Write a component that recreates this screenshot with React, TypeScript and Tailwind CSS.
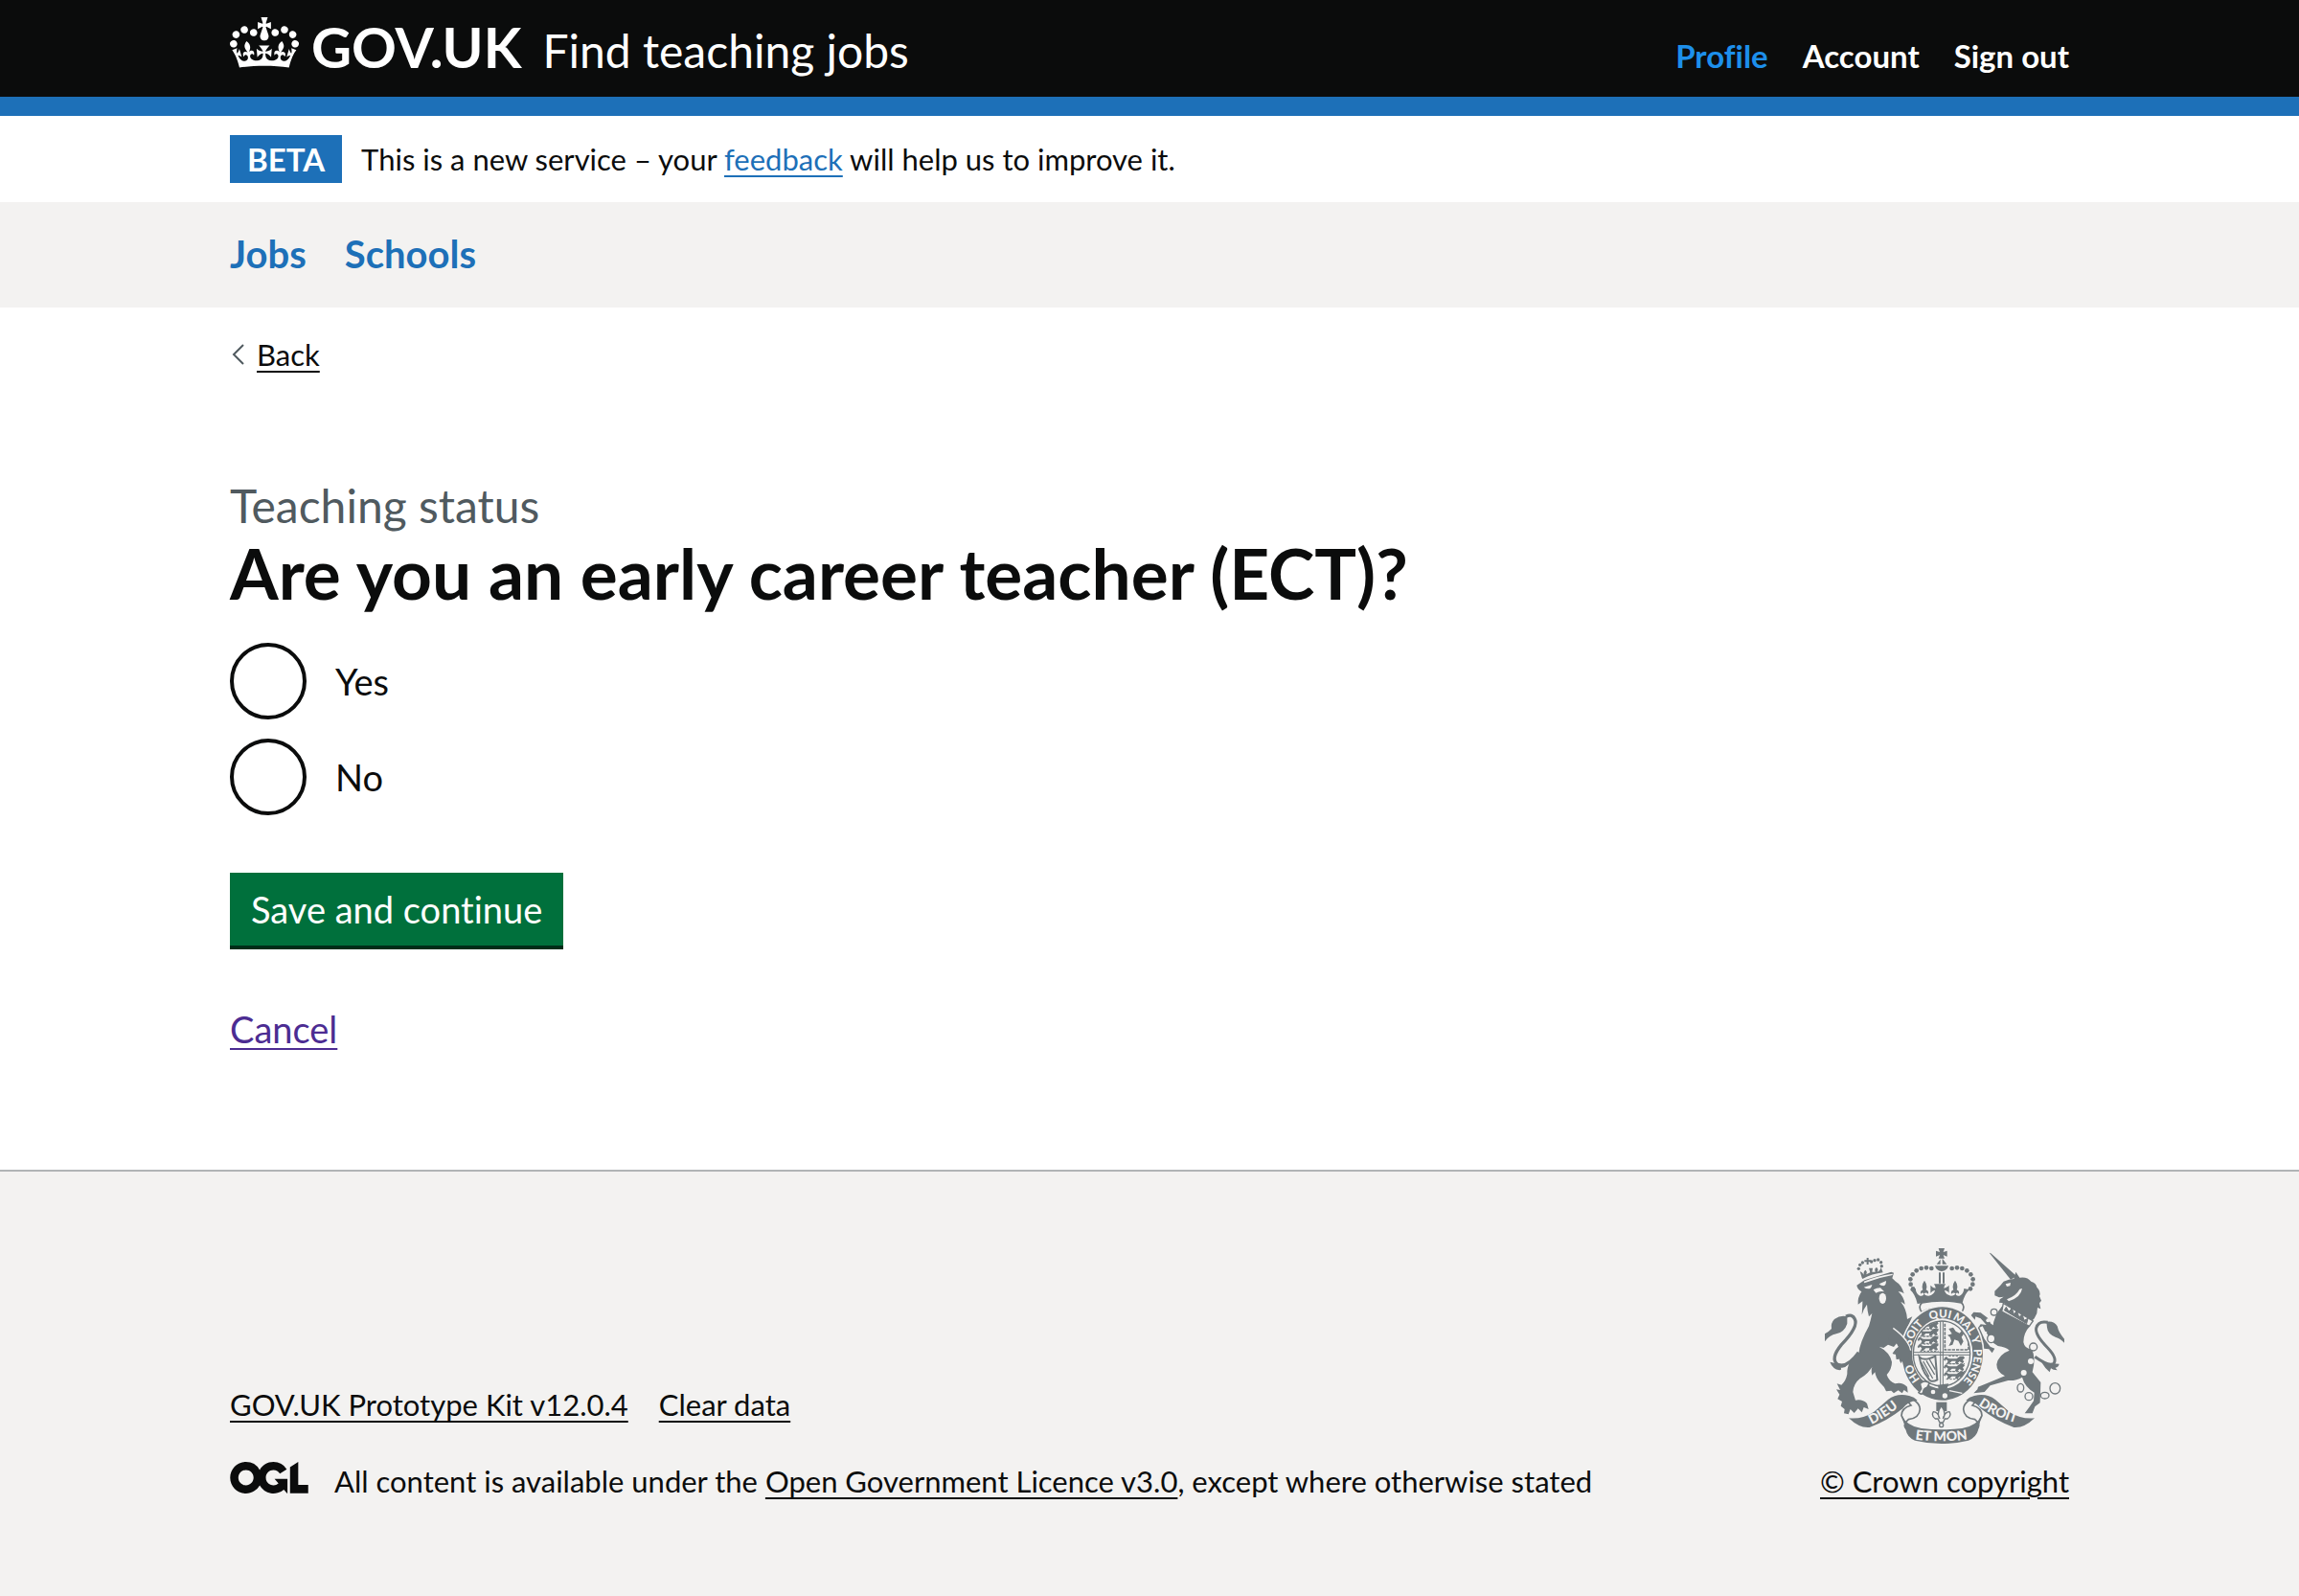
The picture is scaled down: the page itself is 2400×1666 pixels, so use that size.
import type { ReactNode } from "react";

const GREY = "#6f777b";
const PAPER = "#f3f2f1";

function Crown() {
  return (
    <svg viewBox="0 0 132 97" className="-mb-[3px] h-[53px] w-[72px] shrink-0 fill-current" aria-hidden="true">
      <path
        fillRule="evenodd"
        d="M25 30.2c3.5 1.5 7.7-.2 9.1-3.7 1.5-3.6-.2-7.8-3.9-9.2-3.6-1.4-7.6.3-9.1 3.9-1.4 3.5.3 7.5 3.9 9zM9 39.5c3.6 1.5 7.8-.2 9.2-3.7 1.5-3.6-.2-7.8-3.9-9.1-3.6-1.5-7.6.2-9.1 3.8-1.4 3.5.3 7.5 3.8 9zM4.4 57.2c3.5 1.5 7.7-.2 9.1-3.8 1.5-3.6-.2-7.7-3.9-9.1-3.5-1.5-7.6.3-9.1 3.8-1.4 3.5.3 7.6 3.9 9.1zm38.3-21.4c3.5 1.5 7.7-.2 9.1-3.8 1.5-3.6-.2-7.7-3.9-9.1-3.6-1.5-7.6.3-9.1 3.8-1.3 3.6.4 7.7 3.9 9.1zm64.4-5.6c-3.6 1.5-7.8-.2-9.1-3.7-1.5-3.6.2-7.8 3.8-9.2 3.6-1.4 7.7.3 9.2 3.9 1.3 3.5-.4 7.5-3.9 9zm15.9 9.3c-3.6 1.5-7.7-.2-9.1-3.7-1.5-3.6.2-7.8 3.7-9.1 3.6-1.5 7.7.2 9.2 3.8 1.5 3.5-.3 7.5-3.8 9zm4.7 17.7c-3.6 1.5-7.8-.2-9.2-3.8-1.5-3.6.2-7.7 3.9-9.1 3.6-1.5 7.7.3 9.2 3.8 1.3 3.5-.4 7.6-3.9 9.1zM89.3 35.8c-3.6 1.5-7.8-.2-9.2-3.8-1.4-3.6.2-7.7 3.9-9.1 3.6-1.5 7.7.3 9.2 3.8 1.4 3.6-.3 7.7-3.9 9.1zM69.7 17.7l8.9 4.7V9.3l-8.9 2.8c-.2-.3-.5-.6-.9-.9L72.4 0H59.6l3.5 11.2c-.3.3-.6.5-.9.9l-8.8-2.8v13.1l8.8-4.7c.3.3.6.7.9.9l-5 15.4v.1c-.2.8-.4 1.6-.4 2.4 0 4.1 3.1 7.5 7 8.1h.2c.3 0 .7.1 1 .1.4 0 .7 0 1-.1h.2c4-.6 7.1-4.1 7.1-8.1 0-.8-.1-1.7-.4-2.4V34l-5.1-15.4c.4-.2.7-.6 1-.9zM66 92.8c16.9 0 32.8 1.1 47.1 3.2 4-16.9 8.9-26.7 14-33.5l-9.6-3.4c1 4.9 1.1 7.2 0 10.2-1.5-1.4-3-4.3-4.2-8.7L108.6 76c2.8-2 5-3.2 7.5-3.3-4.4 9.4-10 11.9-13.6 11.2-4.3-.8-6.3-4.6-5.6-7.9 1-4.7 5.7-5.9 8-.5 4.3-8.7-3-11.4-7.6-8.8 7.1-7.2 7.9-13.5 2.1-21.1-8 6.1-8.1 12.3-4.5 20.8-4.7-5.4-12.1-2.5-9.5 6.2 3.4-5.2 7.9-2 7.2 3.1-.6 4.3-6.4 7.8-13.5 7.2-10.3-.9-10.9-8-11.2-13.8 2.5-.5 7.1 1.8 11 7.3L80.2 60c-4.1 4.4-8 5.3-12.3 5.4 1.4-4.4 8-11.6 8-11.6H55.5s6.4 7.2 7.9 11.6c-4.2-.1-8-1-12.3-5.4l1.4 16.4c3.9-5.5 8.5-7.7 10.9-7.3-.3 5.8-.9 12.8-11.1 13.8-7.2.6-12.9-2.9-13.5-7.2-.7-5 3.8-8.3 7.1-3.1 2.7-8.7-4.6-11.6-9.4-6.2 3.7-8.5 3.6-14.7-4.6-20.8-5.8 7.6-5 13.9 2.2 21.1-4.7-2.6-11.9.1-7.7 8.8 2.3-5.5 7.1-4.2 8.1.5.7 3.3-1.3 7.1-5.7 7.9-3.5.7-9-1.8-13.5-11.2 2.5.1 4.7 1.3 7.5 3.3l-4.7-15.4c-1.2 4.4-2.7 7.2-4.3 8.7-1.1-3-.9-5.3 0-10.2l-9.5 3.4c5 6.9 9.9 16.7 14 33.5 14.8-2.1 30.8-3.2 47.7-3.2z"
      />
    </svg>
  );
}

function OglLogo() {
  return (
    <svg viewBox="0 0 483.2 195.7" className="h-[33px] w-[82px] shrink-0 fill-current" role="img" aria-label="Open Government Licence">
      <path d="M421.5 142.8V.1l-50.7 32.3v161.1h112.4v-50.7zm-122.3-9.6A47.12 47.12 0 0 1 221 97.8c0-26 21.1-47.1 47.1-47.1 16.7 0 31.4 8.7 39.7 21.8l42.7-27.2A97.63 97.63 0 0 0 268.1 0c-36.5 0-68.3 20.1-85.1 49.7A98 98 0 0 0 97.8 0C43.9 0 0 43.9 0 97.8s43.9 97.8 97.8 97.8c36.5 0 68.3-20.1 85.1-49.7a97.76 97.76 0 0 0 149.6 25.4l19.4 22.2h3v-87.8h-80l24.3 27.5zM97.8 145c-26 0-47.1-21.1-47.1-47.1s21.1-47.1 47.1-47.1 47.1 21.1 47.1 47.1S123.8 145 97.8 145" />
    </svg>
  );
}

const crownPearls = [
  [376, 99], [360, 97], [344, 99], [329, 106], [317, 118], [310, 133], [311, 149], [318, 163],
];

const garterWords: [string, string][] = [
  ["HO", "16%"], ["SOIT", "34.5%"], ["QUI", "49%"], ["MAL", "60.5%"], ["Y", "69%"], ["PENSE", "81%"],
];

const chainRings = [
  [572, 236, 10, 10], [563, 319, 12, 13], [695, 345, 12, 12], [655, 473, 10, 13], [681, 500, 12, 12], [731, 497, 13, 10], [763, 475, 16, 17],
];

function Passant({ y, x = 334 }: { y: number; x?: number }) {
  return (
    <g transform={`translate(${x} ${y})`}>
      <path d="M2 -8q6 -5 9 2l6 2h22l10 -8h12l3 6l-6 5l4 8l-6 3l-8 -6l-6 6h-8l2 -7h-12l-8 8h-8l4 -8l-6 -5l-4 5l-4 -4z" fill={GREY} />
      <path d="M6 12h58M14 -12h30" stroke={GREY} strokeWidth="3" strokeDasharray="7 4" />
    </g>
  );
}

function RoyalArms() {
  return (
    <svg viewBox="42 36 750 612" className="h-[204px] w-[250px]" aria-hidden="true">
      <defs>
        <path id="garter" d="M410 479A99 113 0 0 1 410 253A99 113 0 0 1 410 479" />
        <path id="dieu" d="M188 588Q238 564 286 522" />
        <path id="etmon" d="M312 632Q407 648 502 632" />
        <path id="droit" d="M522 528Q572 564 644 584" />
        <clipPath id="shield"><ellipse cx="408" cy="366" rx="88" ry="101" /></clipPath>
      </defs>

      {/* Imperial crown */}
      <g fill={GREY}>
        <path d="M398 36h19l-4 12 12 -4v18l-12 -5 4 11h-19l4 -11-12 5v-18l12 4z" />
        <path d="M406 68l-14 18h12V70zM410 68v18h14zM387 91h42q-4 16 -21 17q-17 -1 -21 -17z" />
        <path d="M399 112h6v34h-6zM411 112h6v34h-6z" />
        {crownPearls.map(([x, y]) => (
          <g key={x}>
            <circle cx={x} cy={y} r="7" />
            <circle cx={816 - x} cy={y} r="7" />
          </g>
        ))}
        <path d="M396 148h24q-5 9 -5 13q8 0 16 -9v24q-6 -8 -14 -9q2 14 20 18q12 0 14 -8q-8 -4 -12 2q-5 -8 6 -13q-6 -14 5 -29q11 15 5 29q11 5 6 13q-4 -6 -9 -1q0 9 12 7q12 -5 14 -23l17 4q-16 14 -23 44q-70 -15 -140 0q-7 -30 -23 -44l17 -4q2 18 14 23q12 2 12 -7q-5 -5 -9 1q-5 -8 6 -13q-6 -14 5 -29q11 15 5 29q11 5 6 13q-4 -6 -12 -2q2 8 14 8q18 -4 20 -18q-8 1 -14 9v-24q8 9 16 9q0 -4 -5 -13z" />
      </g>
      <path d="M346 207Q333 217 345 236Q408 206 471 236Q483 217 470 207Q408 194 346 207z" fill={PAPER} stroke={GREY} strokeWidth="5" />

      {/* Lion supporter */}
      <path d="M148 362Q112 412 82 400Q58 382 94 338Q148 282 136 258Q128 240 108 250" fill="none" stroke={GREY} strokeWidth="10" />
      <path d="M58 392Q74 396 92 398L112 402Q106 412 92 410Q96 416 88 418Q66 414 58 392zM112 250Q92 244 72 258Q60 270 63 288Q52 300 42 304V328Q56 308 78 304Q104 298 112 272z" fill={GREY} />
      <path
        d="M142 152L166 136L250 110L258 113L253 130L264 140Q282 150 290 178Q280 170 272 172Q290 188 293 212Q284 204 280 204Q298 226 300 258L316 250Q302 280 290 310Q304 330 308 356L316 374L313 390L304 380L299 396L289 384L280 396L276 382L267 384L266 368L254 366L264 352L273 345L268 332L258 345L240 338L226 348L212 344Q246 362 252 392Q252 414 236 432Q242 452 262 460Q284 454 300 470L302 488L290 480L284 490L272 481L258 490L250 482L234 484Q230 470 216 458Q202 444 199 424L190 434Q184 410 196 398Q180 428 152 444Q132 460 130 486L138 512Q160 508 174 522L179 540L164 534L158 550L146 538L134 552L122 540L116 556L102 553L104 540L92 530L96 516L82 508L88 494L78 478L90 480L80 460L94 464Q108 452 112 430Q110 390 148 366Q152 330 180 280L185 262L190 240L180 250L176 232L174 212L164 228Q160 240 158 244Q160 214 160 202L146 212Q144 190 157 172Q144 164 142 152z"
        fill={GREY}
      />
      <g fill={PAPER}>
        <path d="M164 158L190 150Q188 162 180 163Q170 163 164 158zM212 148L234 138Q234 152 226 154Q218 154 212 148zM194 166Q204 160 216 160L228 172Q214 168 202 176z" />
        <ellipse cx="223" cy="193" rx="11" ry="17" />
        <path d="M164 140Q206 122 254 116L254 120Q208 128 166 145z" />
      </g>
      <g fill={GREY}>
        <path d="M158 128L152 108Q160 112 164 119Q162 108 170 104Q176 110 172 118L184 112L180 98H192L190 110L200 110Q196 100 204 96Q212 102 206 110Q214 108 218 96L224 112Q190 116 160 132z" />
        <path d="M173 66h6v7h7v6h-7v8h-6v-8h-7v-6h7z" />
        {[[148, 100], [152, 88], [160, 81], [188, 78], [198, 74], [209, 72], [218, 80], [220, 92]].map(([x, y]) => (
          <circle key={x} cx={x} cy={y} r="5" />
        ))}
      </g>

      {/* Unicorn supporter */}
      <path d="M700 376Q742 406 758 398Q772 382 740 348Q700 308 704 286Q710 262 740 268" fill="none" stroke={GREY} strokeWidth="9" />
      <path d="M736 266Q760 262 770 280Q774 300 792 320V332Q780 318 764 314Q740 304 738 284zM740 396L776 398Q774 408 764 410L770 418Q756 418 750 412L746 424Q732 412 720 392z" fill={GREY} />
      <g fill={GREY}>
        <path d="M557 50L562 52L643 124L624 134z" />
        <path d="M640 110L652 128Q676 124 688 140Q704 144 706 158Q720 172 714 186L720 200L714 208L718 226L708 222L706 240L698 256L692 262Q640 236 604 208L588 206L590 196L602 188L588 190L574 184L574 170L592 152L602 140L618 134L634 132z" />
        <path d="M598 216L686 278Q664 300 664 330Q668 352 690 352Q704 380 692 424L718 456L716 520L700 532L692 553L668 553L682 534L696 514L698 488Q668 470 660 440Q640 452 616 450L560 466L542 486L508 490L520 478L522 470L548 460L606 436Q580 424 580 400Q586 368 620 356Q610 346 584 342L566 330L548 300L568 284Q570 250 598 216z" />
        <path d="M500 246L508 236L530 238L552 254L562 272L574 280L562 302L544 296L536 280L526 284L542 320L560 344L574 350L566 364L556 352L540 350L524 326L518 290L530 274L548 276L530 256L514 250L512 260z" />
      </g>
      <path d="M608 148L624 144L622 154L612 156zM660 162Q656 190 618 202L612 196Q642 184 652 164z" fill={PAPER} />
      <path d="M601 208L694 264L682 280L596 234z" fill={PAPER} stroke={GREY} strokeWidth="4" />
      <path d="M604 230L610 220L618 234L628 224L634 242L644 232L650 252L660 242L666 262L678 256L674 272z" fill={GREY} stroke={GREY} strokeWidth="3" />
      <g fill={PAPER} stroke={GREY} strokeWidth="4">
        {chainRings.map(([x, y, rx, ry]) => <ellipse key={x} cx={x} cy={y} rx={rx} ry={ry} />)}
      </g>
      <g fill={PAPER}>
        <circle cx="687" cy="390" r="9" />
        <circle cx="665" cy="426" r="9" />
        <circle cx="553" cy="262" r="6" />
      </g>

      {/* Garter and shield */}
      <ellipse cx="410" cy="366" rx="132" ry="151" fill={PAPER} />
      <ellipse cx="410" cy="366" rx="127" ry="146" fill={GREY} />
      <ellipse cx="410" cy="366" rx="95" ry="110" fill={PAPER} />
      <ellipse cx="408" cy="366" rx="89" ry="102" fill={PAPER} stroke={GREY} strokeWidth="4" />
      <g clipPath="url(#shield)">
        <Passant y={300} /><Passant y={324} /><Passant y={346} /><Passant y={278} />
        <Passant y={386} x={416} /><Passant y={410} x={416} /><Passant y={434} x={416} />
        <path d="M418 272V354H492V290" fill="none" stroke={GREY} strokeWidth="5" strokeDasharray="10 3" />
        <path d="M430 288L444 284L452 296L464 302L474 290L480 300L470 314L476 328L468 342L460 326L448 322L442 338L430 342L438 326L434 314L426 308L440 304z" fill={GREY} />
        <path d="M338 376Q352 392 388 374L394 448Q372 460 364 440Q346 420 338 376z" fill="none" stroke={GREY} strokeWidth="6" />
        <path d="M350 390L380 444M360 388L386 432M370 384L388 416M344 394L368 438" stroke={GREY} strokeWidth="4" />
      </g>
      <path d="M404 264V468M412 264V468M320 362H496M320 370H496" stroke={GREY} strokeWidth="3" />
      <path d="M396 464L430 460L424 478H398z" fill={GREY} />
      <g fontFamily="Lato" fontWeight="900" fill={PAPER}>
        {garterWords.map(([word, at]) => (
          <text key={word} fontSize="35" textAnchor="middle">
            <textPath href="#garter" startOffset={at}>{word}</textPath>
          </text>
        ))}
      </g>
      <path d="M340 460Q354 446 370 458L362 472Q352 474 350 486Q346 498 336 488L344 476z" fill={PAPER} stroke={GREY} strokeWidth="5" />
      <circle cx="381" cy="486" r="7" fill={PAPER} />
      <circle cx="418" cy="498" r="8" fill={PAPER} />
      <path d="M432 482L472 490" stroke={PAPER} strokeWidth="4" />
      <path d="M256 286Q284 306 298 330Q306 342 308 356L316 374L313 390L304 380L299 396L289 384L280 396L274 382L266 384L264 368L254 366L264 352L273 345L262 326L240 322z" fill={GREY} />
      <path d="M256 286Q284 306 300 330Q309 344 311 356" fill="none" stroke={PAPER} strokeWidth="4" />

      {/* Motto scroll */}
      <g fill={PAPER} stroke={GREY} strokeWidth="5">
        <path d="M288 500Q338 510 340 540Q338 568 304 572Q282 590 300 604Q292 580 282 560Q282 536 312 528z" />
        <path d="M528 500Q478 510 476 540Q478 568 512 572Q534 590 516 604Q524 580 534 560Q534 536 504 528z" />
      </g>
      <g fill={GREY}>
        <path d="M117 568Q160 572 196 548L240 510Q268 488 306 498Q322 502 332 512Q300 516 286 538Q236 578 182 597Q150 600 117 568z" />
        <path d="M699 568Q656 572 620 548L576 510Q548 488 510 498Q494 502 484 512Q516 516 530 538Q580 578 634 597Q666 600 699 568z" />
        <path d="M284 560Q298 592 344 600Q408 608 472 600Q518 592 532 560L522 606Q516 628 492 638Q408 658 324 638Q300 628 296 606z" />
        <path d="M391 518H424V546H391z" />
      </g>
      <path d="M407 530Q390 552 402 570Q396 548 382 548Q374 560 388 570H396L402 582H412L418 570H426Q440 560 432 548Q418 548 412 570Q424 552 407 530z" fill={PAPER} stroke={GREY} strokeWidth="4" />
      <circle cx="407" cy="590" r="6" fill={PAPER} stroke={GREY} strokeWidth="4" />
      <g fontFamily="Lato" fontWeight="900" fill={PAPER} fontSize="42">
        <text><textPath href="#dieu">DIEU</textPath></text>
        <text textAnchor="middle"><textPath href="#etmon" startOffset="50%">ET MON</textPath></text>
        <text><textPath href="#droit">DROIT</textPath></text>
      </g>
    </svg>
  );
}

function Container({ className, children }: { className: string; children: ReactNode }) {
  return <div className={`mx-auto w-4/5 max-w-[1920px] ${className}`}>{children}</div>;
}

function FooterLink({ children }: { children: ReactNode }) {
  return (
    <a href="#" className="underline decoration-2 underline-offset-[5px]">
      {children}
    </a>
  );
}

function RadioOption({ value, label }: { value: string; label: string }) {
  return (
    <div className="flex items-center">
      <input
        type="radio"
        id={`ect-${value}`}
        name="ect"
        value={value}
        className="size-20 shrink-0 appearance-none rounded-full border-4 border-[#0b0c0c] bg-white checked:bg-[#0b0c0c] checked:shadow-[inset_0_0_0_16px_#fff]"
      />
      <label htmlFor={`ect-${value}`} className="px-[30px] text-[38px] leading-[50px]">
        {label}
      </label>
    </div>
  );
}

export default function App() {
  return (
    <div className="flex min-h-screen flex-col bg-white font-['Lato',sans-serif] text-[31px] leading-10 text-[#0b0c0c] [font-variant-ligatures:no-common-ligatures]">
      <header className="border-b-20 border-[#1d70b8] bg-[#0b0c0c] text-white">
        <Container className="flex items-baseline justify-between pt-[18px] pb-[18px]">
          <div className="flex items-baseline gap-[22px]">
            <a href="#" className="flex items-baseline gap-[13px] text-[58px] leading-[60px] font-bold">
              <Crown />
              GOV.UK
            </a>
            <a href="#" className="text-[48px] leading-[60px]">Find teaching jobs</a>
          </div>
          <nav aria-label="Account" className="flex gap-9 text-[33px] font-bold">
            <a href="#" className="text-[#1d8feb]">Profile</a>
            <a href="#">Account</a>
            <a href="#">Sign out</a>
          </nav>
        </Container>
      </header>

      <Container className="flex items-center gap-5 py-5 leading-[50px]">
        <strong className="bg-[#1d70b8] px-[18px] text-[33px] text-white">BETA</strong>
        <p>
          This is a new service – your{" "}
          <a href="#" className="text-[#1d70b8] underline decoration-2 underline-offset-[5px]">feedback</a>{" "}
          will help us to improve it.
        </p>
      </Container>

      <nav aria-label="Main" className="bg-[#f3f2f1]">
        <Container className="flex gap-10 pt-8 pb-[33px] text-[40px] leading-[45px] font-bold text-[#1d70b8]">
          <a href="#">Jobs</a>
          <a href="#">Schools</a>
        </Container>
      </nav>

      <Container className="flex flex-col items-start pt-[29px] pb-[122px]">
        <a href="#" className="flex items-center gap-[13px]">
          <svg viewBox="0 0 15 24" className="h-6 w-[15px]" aria-hidden="true">
            <path d="M14 2L4 12l10 10" fill="none" stroke="#505a5f" strokeWidth="2" />
          </svg>
          <span className="underline decoration-2 underline-offset-[5px]">Back</span>
        </a>

        <main className="mt-[108px]">
          <form onSubmit={(e) => e.preventDefault()}>
            <fieldset>
              <legend>
                <span className="block text-[48px] leading-[60px] text-[#505a5f]">Teaching status</span>
                <h1 className="text-[73px] leading-20 font-bold">Are you an early career teacher (ECT)?</h1>
              </legend>
              <div className="mt-[33px] flex flex-col gap-5">
                <RadioOption value="yes" label="Yes" />
                <RadioOption value="no" label="No" />
              </div>
            </fieldset>
            <button
              type="submit"
              className="mt-[60px] block bg-[#00703c] px-[22px] py-[13px] text-[38px] leading-[50px] text-white shadow-[0_4px_0_#002d18]"
            >
              Save and continue
            </button>
          </form>
          <p className="mt-[62px] text-[38px] leading-[50px]">
            <a href="#" className="text-[#4c2c92] underline decoration-2 underline-offset-[5px]">Cancel</a>
          </p>
        </main>
      </Container>

      <footer className="grow border-t-2 border-[#b1b4b6] bg-[#f3f2f1]">
        <Container className="flex items-end justify-between pt-20 pb-24">
          <div>
            <div className="flex gap-8">
              <FooterLink>GOV.UK Prototype Kit v12.0.4</FooterLink>
              <FooterLink>Clear data</FooterLink>
            </div>
            <div className="mt-10 flex gap-[27px]">
              <OglLogo />
              <p>
                All content is available under the <FooterLink>Open Government Licence v3.0</FooterLink>, except where
                otherwise stated
              </p>
            </div>
          </div>
          <div className="flex flex-col items-center gap-[19px]">
            <RoyalArms />
            <FooterLink>© Crown copyright</FooterLink>
          </div>
        </Container>
      </footer>
    </div>
  );
}
